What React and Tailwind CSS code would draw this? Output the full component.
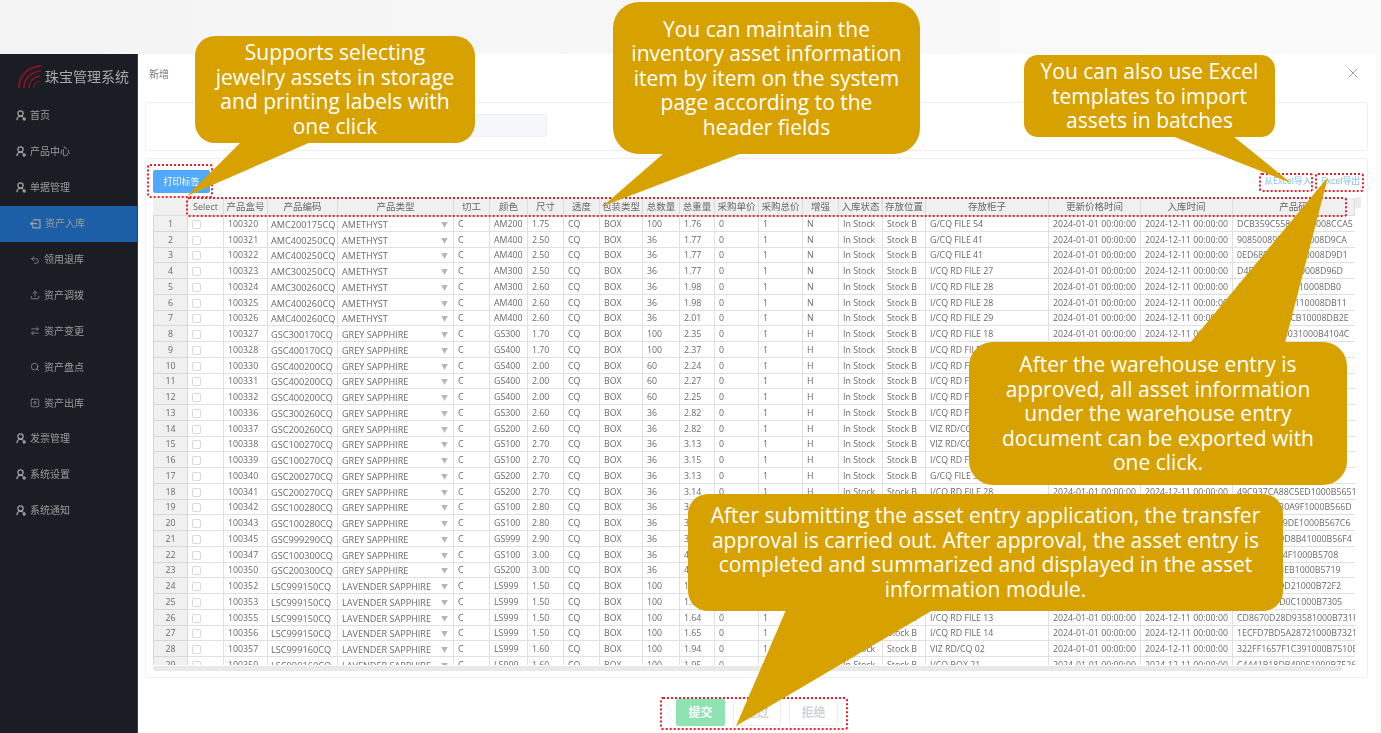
import React from "react";
import { Undo2, Upload, ArrowRightLeft, Search, SquareArrowUp, X } from "lucide-react";

const GRID = "grid grid-cols-[35px_36px_44px_70px_116px_36px_38px_36px_36px_43px_37px_35px_44px_44px_36px_44px_43px_123px_92px_92px_122px]";

const HEAD = ["", "Select", "产品盒号", "产品编码", "产品类型", "切工", "颜色", "尺寸", "透度", "包装类型", "总数量", "总重量", "采购单价", "采购总价", "增强", "入库状态", "存放位置", "存放柜子", "更新价格时间", "入库时间", "产品码"];

const AM = "AMETHYST", GR = "GREY SAPPHIRE", LA = "LAVENDER SAPPHIRE";
// box, code, type, colour, size, qty, weight, enhance, cabinet, unique id
const ROWS = [
  ["100320", "AMC200175CQ", AM, "AM200", "1.75", "100", "1.76", "N", "G/CQ FILE 54", "DCB359C55840A10008CCA5"],
  ["100321", "AMC400250CQ", AM, "AM400", "2.50", "36", "1.77", "N", "G/CQ FILE 41", "90850089D7A210008D9CA"],
  ["100322", "AMC400250CQ", AM, "AM400", "2.50", "36", "1.77", "N", "G/CQ FILE 41", "0ED6894B77C910008D9D1"],
  ["100323", "AMC300250CQ", AM, "AM300", "2.50", "36", "1.77", "N", "I/CQ RD FILE 27", "D4F1A2C88B910008D96D"],
  ["100324", "AMC300260CQ", AM, "AM300", "2.60", "36", "1.98", "N", "I/CQ RD FILE 28", "A7310CF8E2AA10008DB0"],
  ["100325", "AMC400260CQ", AM, "AM400", "2.60", "36", "1.98", "N", "I/CQ RD FILE 28", "6BE2109CDE7110008DB11"],
  ["100326", "AMC400260CQ", AM, "AM400", "2.60", "36", "2.01", "N", "I/CQ RD FILE 29", "31CD8A07C5CB10008DB2E"],
  ["100327", "GSC300170CQ", GR, "GS300", "1.70", "100", "2.35", "H", "I/CQ RD FILE 18", "E90B44A1F6031000B4104C"],
  ["100328", "GSC400170CQ", GR, "GS400", "1.70", "100", "2.37", "H", "I/CQ RD FILE 19", "B27C13D9A1000B418C"],
  ["100330", "GSC400200CQ", GR, "GS400", "2.00", "60", "2.24", "H", "I/CQ RD FILE 20", "F0A71BC61000B4210"],
  ["100331", "GSC400200CQ", GR, "GS400", "2.00", "60", "2.27", "H", "I/CQ RD FILE 20", "C8D2EA941000B4211"],
  ["100332", "GSC400200CQ", GR, "GS400", "2.00", "60", "2.25", "H", "I/CQ RD FILE 20", "A62F3D911000B4216"],
  ["100336", "GSC300260CQ", GR, "GS300", "2.60", "36", "2.82", "H", "I/CQ RD FILE 24", "77B01EC41000B4306"],
  ["100337", "GSC200260CQ", GR, "GS200", "2.60", "36", "2.82", "H", "VIZ RD/CQ 01", "59E3A8D21000B43F0"],
  ["100338", "GSC100270CQ", GR, "GS100", "2.70", "36", "3.13", "H", "VIZ RD/CQ 01", "D14C90BA1000B452F"],
  ["100339", "GSC100270CQ", GR, "GS100", "2.70", "36", "3.15", "H", "I/CQ RD FILE 26", "2AF7B6C11000B46B3"],
  ["100340", "GSC200270CQ", GR, "GS200", "2.70", "36", "3.13", "H", "G/CQ FILE 33", "8E05D1F71000B564D"],
  ["100341", "GSC200270CQ", GR, "GS200", "2.70", "36", "3.14", "H", "I/CQ RD FILE 28", "49C937CA88C5ED1000B5651"],
  ["100342", "GSC100280CQ", GR, "GS100", "2.80", "36", "3.36", "H", "I/CQ RD FILE 28", "5D71E0B130A9F1000B566D"],
  ["100343", "GSC100280CQ", GR, "GS100", "2.80", "36", "3.38", "H", "I/CQ RD FILE 28", "C03AF2E869DE1000B567C6"],
  ["100345", "GSC999290CQ", GR, "GS999", "2.90", "36", "3.62", "H", "I/CQ RD FILE 30", "71B8D4029D8B41000B56F4"],
  ["100347", "GSC100300CQ", GR, "GS100", "3.00", "36", "4.05", "H", "I/CQ RD FILE 30", "9FA02E6C64F1000B5708"],
  ["100350", "GSC200300CQ", GR, "GS200", "3.00", "36", "4.07", "H", "I/CQ RD FILE 31", "E4D17B943EB1000B5719"],
  ["100352", "LSC999150CQ", LA, "LS999", "1.50", "100", "1.62", "H", "I/CQ RD FILE 12", "06BC1F32DD21000B72F2"],
  ["100353", "LSC999150CQ", LA, "LS999", "1.50", "100", "1.63", "H", "I/CQ RD FILE 12", "A83E7BDFD0C1000B7305"],
  ["100355", "LSC999150CQ", LA, "LS999", "1.50", "100", "1.64", "H", "I/CQ RD FILE 13", "CD8670D28D93581000B731F"],
  ["100356", "LSC999150CQ", LA, "LS999", "1.50", "100", "1.65", "H", "I/CQ RD FILE 14", "1ECFD7BD5A28721000B7321"],
  ["100357", "LSC999160CQ", LA, "LS999", "1.60", "100", "1.94", "H", "VIZ RD/CQ 02", "322FF1657F1C391000B7510E"],
  ["100359", "LSC999160CQ", LA, "LS999", "1.60", "100", "1.95", "H", "I/CQ BOX 21", "C4441B18DB490E1000B7526"],
];

function UserIcon() {
  return (
    <svg width="10" height="11" viewBox="0 0 10 11" fill="none" stroke="#a3a3a3" strokeWidth="1.3" className="shrink-0">
      <circle cx="4.5" cy="3.4" r="2.6" />
      <path d="M0.8 10.2c.5-2.6 1.900-4 3.700-4 1 0 1.900.4 2.600 1.200" />
      <circle cx="8.2" cy="9" r="1" />
    </svg>
  );
}

function InIcon() {
  return (
    <svg width="11" height="10" viewBox="0 0 11 10" fill="none" stroke="#a3a3a3" strokeWidth="1.2" className="shrink-0">
      <path d="M3 .8h7v8H3V7" />
      <path d="M7 4.600H.8M2.800 2.600l-2 2 2 2" />
    </svg>
  );
}

const TOP = [["首页"], ["产品中心"], ["单据管理"]];
const SUB = [
  ["资产入库", <InIcon key="i" />, true],
  ["领用退库", <Undo2 key="i" size={10} color="#a3a3a3" strokeWidth={1.6} />],
  ["资产调拨", <Upload key="i" size={10} color="#a3a3a3" strokeWidth={1.6} />],
  ["资产变更", <ArrowRightLeft key="i" size={10} color="#a3a3a3" strokeWidth={1.6} />],
  ["资产盘点", <Search key="i" size={10} color="#a3a3a3" strokeWidth={1.6} />],
  ["资产出库", <SquareArrowUp key="i" size={10} color="#a3a3a3" strokeWidth={1.6} />],
];
const BOTTOM = [["发票管理"], ["系统设置"], ["系统通知"]];

function Sidebar() {
  return (
    <aside className="w-[138px] shrink-0 bg-[#1a1d24] border-r border-[#3a3d44] text-[10px] text-[#9c9c9c]">
      <div className="h-[44px] flex items-center pl-[18px] pt-[1px] gap-[3px]">
        <svg width="24" height="24" viewBox="0 0 24 24" fill="none" stroke="#8a1029" className="shrink-0">
          <path d="M1 23C1 11 9 2 23 1" strokeWidth="2" />
          <path d="M6 23C6 14 12 7 23 6" strokeWidth="1.7" />
          <path d="M11 23c0-6 4-11 11-12" strokeWidth="1.400" />
          <path d="M15.500 23c0-3 2.500-6 6-7" strokeWidth="1.200" />
        </svg>
        <span className="text-[14px] leading-none text-[#a8a8a8] whitespace-nowrap">珠宝管理系统</span>
      </div>
      {TOP.map(([t]) => (
        <div key={t} className="h-[35.9px] flex items-center pl-[16px] gap-[4px]"><UserIcon />{t}</div>
      ))}
      {SUB.map(([t, icon, active]) => (
        <div key={t} className={active ? "h-[35.9px] flex items-center pl-[30px] gap-[4px] bg-[#1c5fa6]" : "h-[35.9px] flex items-center pl-[30px] gap-[4px]"}>
          {icon}{t}
        </div>
      ))}
      {BOTTOM.map(([t]) => (
        <div key={t} className="h-[35.9px] flex items-center pl-[16px] gap-[4px]"><UserIcon />{t}</div>
      ))}
    </aside>
  );
}

function Cell({ children, center, last }) {
  return (
    <div className={(center ? "justify-center " : "") + (last ? "" : "border-r ") + "flex items-center pt-[2px] px-[4px] border-b border-[#e0e0e0] overflow-hidden whitespace-nowrap"}>
      {children}
    </div>
  );
}

function Row({ r, i }) {
  const [box, code, type, colour, size, qty, weight, enh, cab, uid] = r;
  return (
    <div className={GRID + " h-[15.75px] w-max"}>
      <div className="flex items-center justify-center pt-[2px] bg-[#f0f0f0] border-l border-r border-b border-[#d8d8d8]">{i + 1}</div>
      <Cell><span className="block w-[9px] h-[9px] bg-white border border-[#d9d9d9] rounded-[2px]" /></Cell>
      <Cell>{box}</Cell>
      <Cell><span className="text-[9.2px] -ml-[1px]">{code}</span></Cell>
      <Cell><span className="flex-1 text-[9.1px]">{type}</span><span className="text-[7px] text-[#b5b5b5] pr-[1px]">▼</span></Cell>
      <Cell>C</Cell>
      <Cell>{colour}</Cell>
      <Cell>{size}</Cell>
      <Cell>CQ</Cell>
      <Cell>BOX</Cell>
      <Cell>{qty}</Cell>
      <Cell>{weight}</Cell>
      <Cell>0</Cell>
      <Cell>1</Cell>
      <Cell>{enh}</Cell>
      <Cell>In Stock</Cell>
      <Cell>Stock B</Cell>
      <Cell>{cab}</Cell>
      <Cell>2024-01-01 00:00:00</Cell>
      <Cell>2024-12-11 00:00:00</Cell>
      <Cell last>{uid}</Cell>
    </div>
  );
}

function Table() {
  return (
    <div className="relative">
      <div className="w-[1202px] h-[467px] overflow-hidden text-[8.8px] leading-none text-[#6a6a6a]">
        <div className={GRID + " h-[18px] w-max bg-[#f0f0f0]"}>
          {HEAD.map((h, i) => (
            <div key={i} className={(i === 1 ? "text-[9px] " : "text-[9.5px] ") + "flex items-center justify-center whitespace-nowrap overflow-hidden border-r border-b border-[#dcdcdc] text-[#666]"}>{h}</div>
          ))}
        </div>
        {ROWS.map((r, i) => <Row key={r[0]} r={r} i={i} />)}
      </div>
      <div className="absolute left-[1202px] top-[-1px] w-[6px] h-[11px] bg-[#ececec] rounded-[2px]" />
      <div className="mt-[1px] w-[1189px] h-[5px] bg-[#e8eaea] rounded-[2px]" />
    </div>
  );
}

function Main() {
  return (
    <main className="w-[1238px] shrink-0 bg-white pl-[7px] pr-[8px] text-[#777]">
      <div className="h-[40px] mb-[8px] flex items-center justify-between pl-[4px] pr-[7px] pt-[1px]">
        <span className="text-[10px]">新增</span>
        <X size={16} color="#9a9a9a" strokeWidth={1.4} className="mb-[3px]" />
      </div>
      <div className="h-[49px] border border-[#eeeeee] rounded-[3px] flex items-center pl-[234px]">
        <div className="w-[167px] h-[23px] mb-[2px] bg-[#f5f7fa] border border-[#eef0f4] rounded-[2px]" />
      </div>
      <div className="mt-[7px] h-[520px] border border-[#eeeeee] rounded-[3px] pt-[11px] px-[7px]">
        <div className="flex justify-between h-[23px] mb-[5px]">
          <button className="w-[57px] h-[23px] bg-[#52a9fb] text-white text-[9px] rounded-[2px]">打印标签</button>
          <div className="flex items-center gap-[10px] text-[8.8px] text-[#7fbdfb]">
            <span>从Excel导入</span>
            <span>Excel导出</span>
          </div>
        </div>
        <Table />
      </div>
      <div className="mt-[21px] ml-[531px] flex gap-[8px] text-[12px] font-bold">
        <div className="w-[49px] h-[27px] rounded-[2px] bg-[#8fe3b2] text-white flex items-center justify-center">提交</div>
        <div className="w-[48px] h-[27px] rounded-[2px] border border-[#eeeeee] text-[#cfd2d8] flex items-center justify-center">通过</div>
        <div className="w-[49px] h-[27px] rounded-[2px] border border-[#eeeeee] text-[#cfd2d8] flex items-center justify-center">拒绝</div>
      </div>
    </main>
  );
}

const BUBBLES = [
  { key: "a", cls: "left-[195px] top-[36px] w-[280px] h-[107px] rounded-[20px] pb-[1px]", lines: ["Supports selecting", "jewelry assets in storage", "and printing labels with", "one click"] },
  { key: "b", cls: "left-[613px] top-[2px] w-[307px] h-[152px] rounded-[26px]", lines: ["You can maintain the", "inventory asset information", "item by item on the system", "page according to the", "header fields"] },
  { key: "c", cls: "left-[1024px] top-[55px] w-[251px] h-[82px] rounded-[14px]", lines: ["You can also use Excel", "templates to import", "assets in batches"] },
  { key: "d", cls: "left-[969px] top-[342px] w-[378px] h-[143px] rounded-[24px]", lines: ["After the warehouse entry is", "approved, all asset information", "under the warehouse entry", "document can be exported with", "one click."] },
  { key: "e", cls: "left-[688px] top-[494px] w-[595px] h-[117px] rounded-[20px] pb-[1px]", lines: ["After submitting the asset entry application, the transfer", "approval is carried out. After approval, the asset entry is", "completed and summarized and displayed in the asset", "information module."] },
];

const BOXES = [
  "left-[147px] top-[164px] w-[66px] h-[34px]",
  "left-[186px] top-[197px] w-[1161px] h-[20px]",
  "left-[1259px] top-[173px] w-[54px] h-[19px]",
  "left-[1315px] top-[173px] w-[49px] h-[19px]",
  "left-[660px] top-[697px] w-[188px] h-[33px]",
];

function Annotations() {
  return (
    <>
      {BOXES.map((c) => (
        <div key={c} className={"absolute border-2 border-dotted border-[#e8202f] rounded-[3px] " + c} />
      ))}
      <svg className="absolute left-0 top-0 pointer-events-none" width="1381" height="733">
        <g fill="#d7a200">
          <polygon points="241,142 311,142 187,196" />
          <polygon points="664,153 742,153 603,206" />
          <polygon points="1172,136 1233,136 1291,183" />
          <polygon points="1190,343 1285,343 1328,177" />
          <polygon points="786,610 933,610 736,726" />
        </g>
      </svg>
      {BUBBLES.map((b) => (
        <div key={b.key} className={"absolute bg-[#d7a200] text-white flex flex-col items-center justify-center text-[21px] leading-[24.5px] font-['Open_Sans',sans-serif] whitespace-nowrap " + b.cls}>
          {b.lines.map((l) => <span key={l}>{l}</span>)}
        </div>
      ))}
    </>
  );
}

export default function App() {
  return (
    <div className="relative w-full h-screen overflow-hidden bg-linear-to-r from-[#f4f4f4] to-[#fafafa] font-['Open_Sans','Noto_Sans_CJK_SC',sans-serif]">
      <div className="pt-[54px] flex h-full blur-[0.4px]">
        <Sidebar />
        <Main />
      </div>
      <Annotations />
    </div>
  );
}
